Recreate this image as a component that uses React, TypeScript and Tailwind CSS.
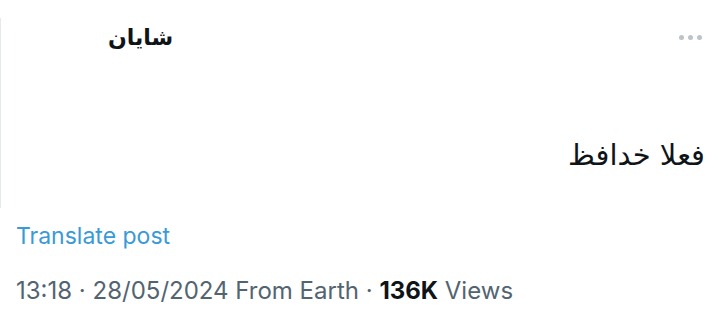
export default function App() {
  return (
    <div className="w-[720px] h-[310px] bg-white relative overflow-hidden font-['Inter',sans-serif]">
      <div className="absolute left-0 top-[18px] h-[190px] w-px bg-[#e6e8ea]" />
      <div className="flex flex-row items-start justify-between pl-[108px] pr-[18px] pt-[21px]">
        <div
          dir="rtl"
          className="text-[22px] leading-[34px] font-bold text-[#0f1419] font-['DejaVu_Sans',sans-serif]"
        >
          شایان
        </div>
        <div className="flex flex-row gap-[4px] mt-[14px]">
          <span className="w-[5px] h-[5px] rounded-full bg-[#bcc3c9]" />
          <span className="w-[5px] h-[5px] rounded-full bg-[#bcc3c9]" />
          <span className="w-[5px] h-[5px] rounded-full bg-[#bcc3c9]" />
        </div>
      </div>
      <div
        dir="rtl"
        className="pr-[15px] mt-[80px] text-[29px] leading-[40px] text-[#0f1419] font-['DejaVu_Sans',sans-serif]"
      >
        فعلا خدافظ
      </div>
      <div className="pl-[16px] mt-[46px] text-[23px] leading-[30px] text-[#3a9ad6]">
        Translate post
      </div>
      <div className="pl-[16px] mt-[25px] text-[24px] leading-[30px] text-[#536471]">
        13:18 · 28/05/2024 From Earth ·{" "}
        <span className="font-bold text-[#0f1419]">136K</span> Views
      </div>
    </div>
  );
}
